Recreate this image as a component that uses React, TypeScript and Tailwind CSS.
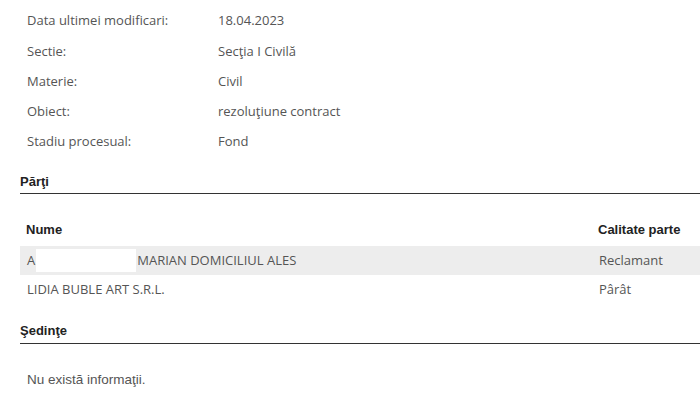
import React from "react";

const seg = { fontFamily: '"Open Sans", "Noto Sans", Tahoma, sans-serif' };
const ari = { fontFamily: '"Liberation Sans", Arial, sans-serif' };

const info: [string, string][] = [
  ["Data ultimei modificari:", "18.04.2023"],
  ["Sectie:", "Secţia I Civilă"],
  ["Materie:", "Civil"],
  ["Obiect:", "rezoluţiune contract"],
  ["Stadiu procesual:", "Fond"],
];

export default function App() {
  return (
    <div className="w-[700px] h-[405px] overflow-hidden bg-white pl-[20px]">
      <div className="pt-[6px]">
        {info.map(([k, v]) => (
          <div key={k} className="flex h-[30.25px] items-center text-[13px] text-[#555]" style={seg}>
            <div className="w-[198px] pl-[7px]">{k}</div>
            <div>{v}</div>
          </div>
        ))}
      </div>
      <div className="mt-[15px] border-b border-[#333] pb-[1px] text-[13px] font-bold text-[#222]" style={ari}>
        Părţi
      </div>
      <div className="mt-[23px]">
        <div className="flex h-[26px] items-center text-[13px] font-bold text-[#222]" style={ari}>
          <div className="w-[572px] pl-[6px]">Nume</div>
          <div className="pl-[6px]">Calitate parte</div>
        </div>
        <div className="mt-[3px] flex h-[29px] items-center bg-[#ededed] text-[13px] text-[#555]" style={seg}>
          <div className="flex w-[572px] items-center pl-[7px]">
            <span>A</span>
            <span className="ml-[1px] mr-[1px] inline-block h-[23px] w-[100px] bg-white" />
            <span>MARIAN DOMICILIUL ALES</span>
          </div>
          <div className="pl-[7px]">Reclamant</div>
        </div>
        <div className="flex h-[30px] items-center text-[13px] text-[#555]" style={seg}>
          <div className="w-[572px] pl-[7px]">LIDIA BUBLE ART S.R.L.</div>
          <div className="pl-[7px]">Pârât</div>
        </div>
      </div>
      <div className="mt-[16px] border-b border-[#333] pb-[3px] text-[13px] font-bold text-[#222]" style={ari}>
        Şedinţe
      </div>
      <div className="mt-[26px] pl-[7px] text-[13.5px] text-[#555]" style={ari}>
        Nu există informaţii.
      </div>
    </div>
  );
}
